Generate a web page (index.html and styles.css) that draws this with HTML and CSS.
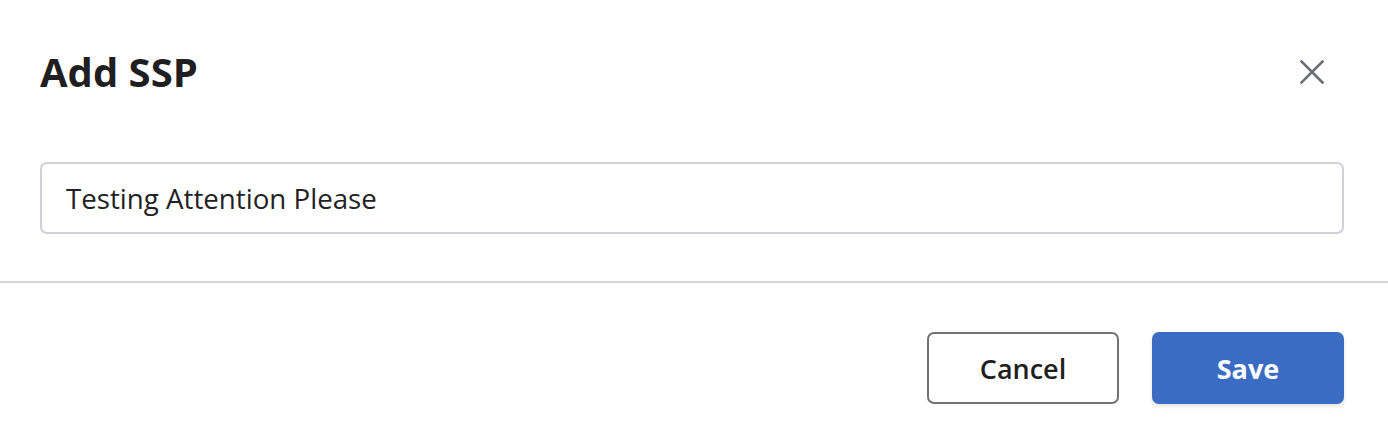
FILE: index.html
```html
<!DOCTYPE html>
<html lang="en">
<head>
<meta charset="utf-8">
<title>Add SSP</title>
<link rel="stylesheet" href="styles.css">
</head>
<body>
<div class="dialog">
  <div class="body">
    <div class="header">
      <h1 class="title">Add SSP</h1>
      <button class="close" aria-label="Close">
        <svg width="24" height="24" viewBox="0 0 24 24"><path d="M1.5 1.5 L22.5 22.5 M22.5 1.5 L1.5 22.5" stroke="#6c6e75" stroke-width="2.6" stroke-linecap="square" fill="none"/></svg>
      </button>
    </div>
    <input class="field" type="text" value="Testing Attention Please">
  </div>
  <div class="footer">
    <button class="btn btn-cancel">Cancel</button>
    <button class="btn btn-save">Save</button>
  </div>
</div>
</body>
</html>
```

FILE: styles.css
```css
* { box-sizing: border-box; }
html, body { margin: 0; padding: 0; background: #ffffff; }
body { font-family: "Open Sans", "Liberation Sans", sans-serif; color: #1f1f22; }
.dialog { width: 1388px; height: 446px; display: flex; flex-direction: column; }
.body { padding: 48px 44px 47px 40px; border-bottom: 2px solid #d4d4dc; }
.header { display: flex; align-items: center; justify-content: space-between; height: 48px; }
.title { margin: 0; font-size: 40px; line-height: 48px; font-weight: 700; color: #1f1f22; letter-spacing: 0; }
.close { width: 48px; height: 48px; border: none; background: transparent; padding: 0; display: flex; align-items: center; justify-content: center; margin-right: 8px; cursor: pointer; }
.field { display: block; width: 100%; height: 72px; margin-top: 66px; border: 2px solid #cfd0d8; border-radius: 7px; padding: 0 24px; font-family: inherit; font-size: 27.7px; color: #222225; background: #fff; outline: none; }
.footer { display: flex; justify-content: flex-end; gap: 33px; padding: 49px 44px 0 40px; }
.btn { width: 192px; height: 72px; border-radius: 7px; font-family: inherit; font-size: 27px; font-weight: 600; cursor: pointer; }
.btn-cancel { background: #fff; border: 2px solid #717178; color: #1f1f22; }
.btn-save { background: #3a6cc3; border: none; color: #fff; font-weight: 700; box-shadow: 0 2px 4px rgba(0,0,0,0.12); }
```
